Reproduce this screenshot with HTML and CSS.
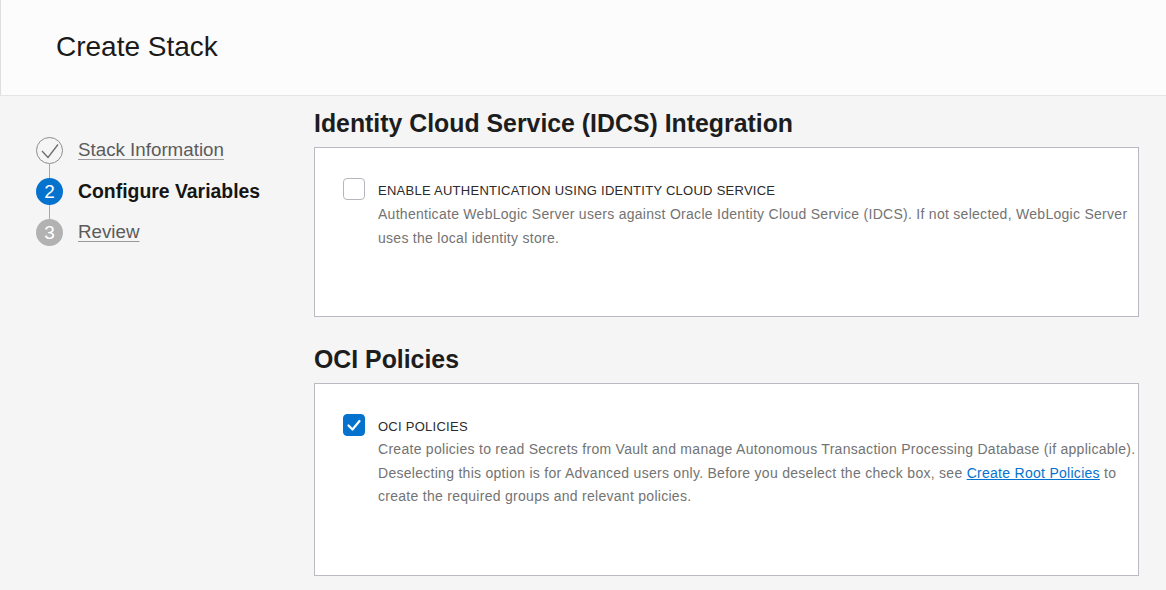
FILE: index.html
```html
<!DOCTYPE html>
<html lang="en">
<head>
<meta charset="utf-8">
<title>Create Stack</title>
<link rel="stylesheet" href="styles.css">
</head>
<body>
<header class="header">
  <h1 class="title">Create Stack</h1>
</header>
<div class="layout">
  <nav class="steps">
    <div class="step step-done">
      <span class="circle circle-done">
        <svg width="27" height="27" viewBox="0 0 27 27"><polyline points="6,14 12,20.5 22,7.5" fill="none" stroke="#6b6b6b" stroke-width="1.3"/></svg>
      </span>
      <a class="step-link" href="#">Stack Information</a>
    </div>
    <div class="step step-current">
      <span class="circle circle-current">2</span>
      <span class="step-current-label">Configure Variables</span>
    </div>
    <div class="step step-last">
      <span class="circle circle-todo">3</span>
      <a class="step-link" href="#">Review</a>
    </div>
  </nav>
  <main class="main">
    <h2 class="section-title">Identity Cloud Service (IDCS) Integration</h2>
    <section class="panel">
      <div class="field">
        <span class="checkbox"></span>
        <div class="field-text">
          <div class="field-label">ENABLE AUTHENTICATION USING IDENTITY CLOUD SERVICE</div>
          <div class="field-desc">Authenticate WebLogic Server users against Oracle Identity Cloud Service (IDCS). If not selected, WebLogic Server uses the local identity store.</div>
        </div>
      </div>
    </section>
    <h2 class="section-title section-title-2">OCI Policies</h2>
    <section class="panel panel-2">
      <div class="field">
        <span class="checkbox checkbox-on">
          <svg width="22" height="22" viewBox="0 0 22 22"><polyline points="5.5,11.5 9.5,15.5 16.5,7" fill="none" stroke="#ffffff" stroke-width="2.2" stroke-linecap="round" stroke-linejoin="round"/></svg>
        </span>
        <div class="field-text">
          <div class="field-label">OCI POLICIES</div>
          <div class="field-desc field-desc-2">Create policies to read Secrets from Vault and manage Autonomous Transaction Processing Database (if applicable). Deselecting this option is for Advanced users only. Before you deselect the check box, see <a class="link" href="#">Create Root Policies</a> to create the required groups and relevant policies.</div>
        </div>
      </div>
    </section>
  </main>
</div>
</body>
</html>
```

FILE: styles.css
```css
html, body {
  margin: 0;
  padding: 0;
}

body {
  background: #f5f5f5;
  font-family: "Liberation Sans", Arial, sans-serif;
  color: #161513;
  width: 1166px;
  height: 590px;
  overflow: hidden;
}

.header {
  height: 95px;
  background: #fcfcfc;
  border-bottom: 1px solid #e4e4e4;
  border-left: 1px solid #dedede;
  display: flex;
  align-items: center;
  padding-left: 55px;
}

.title {
  margin: 0;
  font-size: 28px;
  font-weight: normal;
  color: #1a1a1a;
  line-height: 32px;
  position: relative;
  top: -1px;
}

.layout {
  display: flex;
}

.steps {
  width: 278px;
  padding: 41px 0 0 36px;
  display: flex;
  flex-direction: column;
}

.step {
  display: flex;
  align-items: center;
  gap: 15px;
  height: 27px;
  position: relative;
  margin-bottom: 14px;
}

.step::after {
  content: "";
  position: absolute;
  left: 13px;
  top: 27px;
  width: 1px;
  height: 14px;
  background: #a8a8a8;
}

.step-last::after {
  display: none;
}

.circle {
  width: 27px;
  height: 27px;
  border-radius: 50%;
  box-sizing: border-box;
  display: flex;
  align-items: center;
  justify-content: center;
  font-size: 19px;
  color: #ffffff;
  flex: none;
}

.circle-done {
  border: 1px solid #8c8c8c;
  background: transparent;
}

.circle-done svg {
  margin: -1px;
}

.circle-current {
  background: #0572ce;
}

.circle-todo {
  background: #b2b2b2;
}

.step-link {
  font-size: 18.75px;
  color: #5b5b5b;
  text-decoration: underline;
  text-decoration-color: #9a9a9a;
  text-underline-offset: 3px;
  position: relative;
  top: -1px;
}

.step-current-label {
  font-size: 19.4px;
  font-weight: bold;
  color: #161513;
}

.main {
  flex: 1;
  padding: 13px 27px 0 0;
}

.section-title {
  margin: 0 0 8px 0;
  font-size: 24.85px;
  line-height: 30px;
  font-weight: bold;
  color: #1d1d1d;
}

.section-title-2 {
  margin-top: 28px;
}

.panel {
  background: #ffffff;
  border: 1px solid #b8bbc1;
  padding: 30px 0 66px 28px;
}

.field {
  display: flex;
  gap: 13px;
}

.checkbox {
  width: 22px;
  height: 22px;
  box-sizing: border-box;
  border: 1px solid #b3b7bd;
  border-radius: 4px;
  background: #ffffff;
  flex: none;
}

.checkbox-on {
  background: #0572ce;
  border-color: #0572ce;
}

.checkbox-on svg {
  display: block;
  margin: -1px;
}

.field-text {
  flex: 1;
}

.field-label {
  font-size: 13px;
  letter-spacing: 0.26px;
  line-height: 24px;
  color: #2b2b2b;
  position: relative;
  top: 1px;
}

.field-desc {
  font-size: 14px;
  letter-spacing: 0.28px;
  line-height: 24px;
  color: #737373;
}

.field-desc-2 {
  line-height: 23.5px;
}

.link {
  color: #0572ce;
  text-decoration: underline;
}
```
